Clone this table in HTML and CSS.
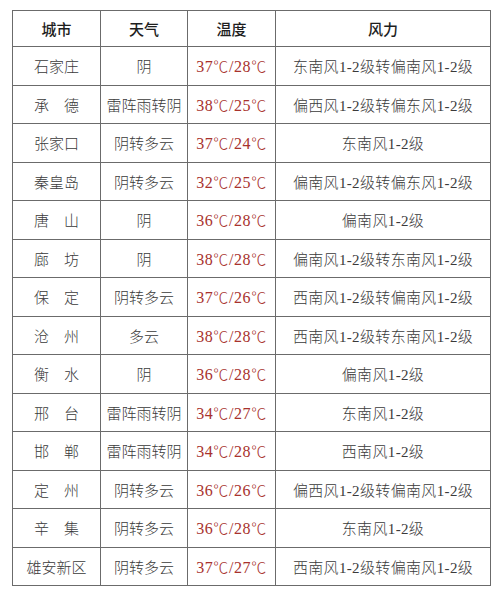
FILE: index.html
```html
<!DOCTYPE html>
<html lang="zh">
<head>
<meta charset="utf-8">
<link rel="stylesheet" href="styles.css">
</head>
<body>
<table class="weather">
  <colgroup>
    <col class="c1"><col class="c2"><col class="c3"><col class="c4">
  </colgroup>
  <thead>
    <tr><th>城市</th><th>天气</th><th>温度</th><th>风力</th></tr>
  </thead>
  <tbody>
    <tr><td>石家庄</td><td>阴</td><td class="t">37<span class="d">℃</span>/28<span class="d">℃</span></td><td class="w">东南风1-2级转偏南风1-2级</td></tr>
    <tr><td>承　德</td><td>雷阵雨转阴</td><td class="t">38<span class="d">℃</span>/25<span class="d">℃</span></td><td class="w">偏西风1-2级转偏东风1-2级</td></tr>
    <tr><td>张家口</td><td>阴转多云</td><td class="t">37<span class="d">℃</span>/24<span class="d">℃</span></td><td class="w">东南风1-2级</td></tr>
    <tr><td>秦皇岛</td><td>阴转多云</td><td class="t">32<span class="d">℃</span>/25<span class="d">℃</span></td><td class="w">偏南风1-2级转偏东风1-2级</td></tr>
    <tr><td>唐　山</td><td>阴</td><td class="t">36<span class="d">℃</span>/28<span class="d">℃</span></td><td class="w">偏南风1-2级</td></tr>
    <tr><td>廊　坊</td><td>阴</td><td class="t">38<span class="d">℃</span>/28<span class="d">℃</span></td><td class="w">偏南风1-2级转东南风1-2级</td></tr>
    <tr><td>保　定</td><td>阴转多云</td><td class="t">37<span class="d">℃</span>/26<span class="d">℃</span></td><td class="w">西南风1-2级转偏南风1-2级</td></tr>
    <tr><td>沧　州</td><td>多云</td><td class="t">38<span class="d">℃</span>/28<span class="d">℃</span></td><td class="w">西南风1-2级转东南风1-2级</td></tr>
    <tr><td>衡　水</td><td>阴</td><td class="t">36<span class="d">℃</span>/28<span class="d">℃</span></td><td class="w">偏南风1-2级</td></tr>
    <tr><td>邢　台</td><td>雷阵雨转阴</td><td class="t">34<span class="d">℃</span>/27<span class="d">℃</span></td><td class="w">东南风1-2级</td></tr>
    <tr><td>邯　郸</td><td>雷阵雨转阴</td><td class="t">34<span class="d">℃</span>/28<span class="d">℃</span></td><td class="w">西南风1-2级</td></tr>
    <tr><td>定　州</td><td>阴转多云</td><td class="t">36<span class="d">℃</span>/26<span class="d">℃</span></td><td class="w">偏西风1-2级转偏南风1-2级</td></tr>
    <tr><td>辛　集</td><td>阴转多云</td><td class="t">36<span class="d">℃</span>/28<span class="d">℃</span></td><td class="w">东南风1-2级</td></tr>
    <tr><td>雄安新区</td><td>阴转多云</td><td class="t">37<span class="d">℃</span>/27<span class="d">℃</span></td><td class="w">西南风1-2级转偏南风1-2级</td></tr>
  </tbody>
</table>
</body>
</html>
```
FILE: styles.css
```css
html, body {
  margin: 0;
  padding: 0;
  background: #ffffff;
}
body {
  font-family: "Liberation Serif", "Noto Sans CJK SC", serif;
  color: #3a3a3a;
}
.weather {
  border-collapse: collapse;
  margin: 10px 0 0 12px;
  width: 478px;
  table-layout: fixed;
}
.c1 { width: 88px; }
.c2 { width: 87px; }
.c3 { width: 88px; }
.c4 { width: 215px; }
.weather th,
.weather td {
  border: 1px solid #6b6b6b;
  text-align: center;
  vertical-align: middle;
  padding: 0;
  font-size: 15px;
  font-weight: 300;
  white-space: nowrap;
}
.weather th {
  height: 35px;
  color: #1e1e1e;
  font-weight: 500;
}
.weather td {
  height: 37.5px;
}
.weather td.t {
  color: #a8322d;
  font-size: 16px;
  letter-spacing: 0.6px;
}
.weather td.w {
  letter-spacing: 0.35px;
}
.weather .d {
  font-family: "Noto Sans CJK SC", sans-serif;
  font-weight: 300;
  font-size: 15px;
}
```
